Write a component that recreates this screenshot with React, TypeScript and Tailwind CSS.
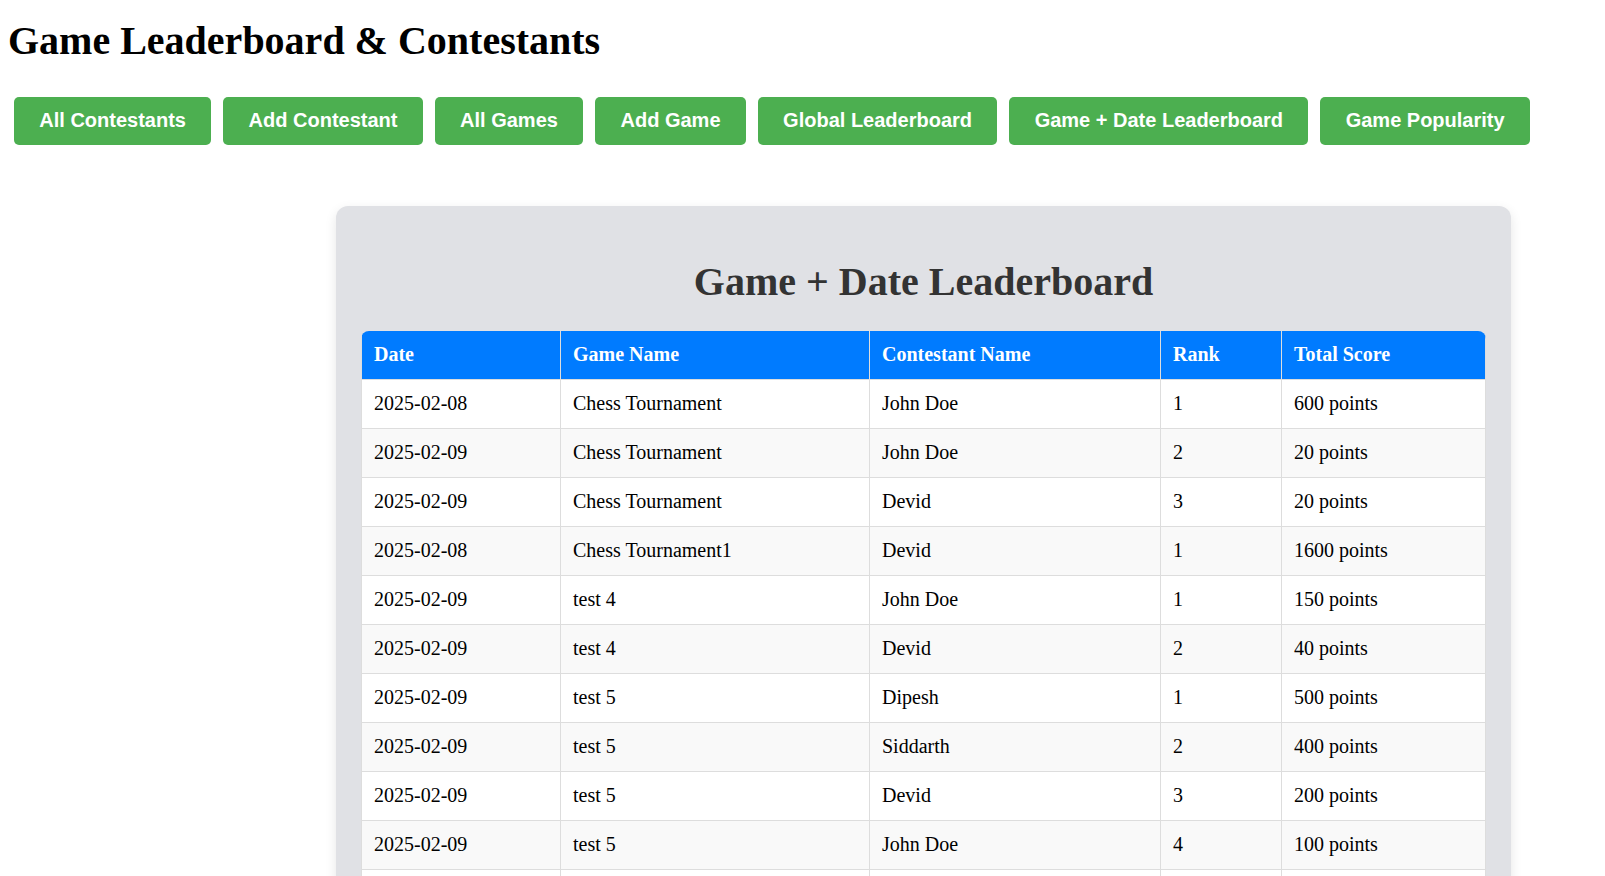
import React from 'react';

type Entry = {
  date: string;
  game: string;
  contestant: string;
  rank: number;
  score: number;
};

const navItems = [
  'All Contestants',
  'Add Contestant',
  'All Games',
  'Add Game',
  'Global Leaderboard',
  'Game + Date Leaderboard',
  'Game Popularity',
];

const entries: Entry[] = [
  { date: '2025-02-08', game: 'Chess Tournament', contestant: 'John Doe', rank: 1, score: 600 },
  { date: '2025-02-09', game: 'Chess Tournament', contestant: 'John Doe', rank: 2, score: 20 },
  { date: '2025-02-09', game: 'Chess Tournament', contestant: 'Devid', rank: 3, score: 20 },
  { date: '2025-02-08', game: 'Chess Tournament1', contestant: 'Devid', rank: 1, score: 1600 },
  { date: '2025-02-09', game: 'test 4', contestant: 'John Doe', rank: 1, score: 150 },
  { date: '2025-02-09', game: 'test 4', contestant: 'Devid', rank: 2, score: 40 },
  { date: '2025-02-09', game: 'test 5', contestant: 'Dipesh', rank: 1, score: 500 },
  { date: '2025-02-09', game: 'test 5', contestant: 'Siddarth', rank: 2, score: 400 },
  { date: '2025-02-09', game: 'test 5', contestant: 'Devid', rank: 3, score: 200 },
  { date: '2025-02-09', game: 'test 5', contestant: 'John Doe', rank: 4, score: 100 },
  { date: '2025-02-09', game: 'test 6', contestant: 'Dipesh', rank: 1, score: 80 },
];

const cell = 'border border-[#ddd] px-[12px] pt-[12px] pb-[13px] text-left leading-[23px]';

const App: React.FC = () => {
  return (
    <div className="min-h-screen bg-white px-[8px] pt-[18px] pb-[40px] font-['Liberation_Serif',serif] text-black">
      <h1 className="text-[40px] font-bold leading-[46px]">Game Leaderboard &amp; Contestants</h1>

      {/* Navigation */}
      <div className="mt-[33px] ml-[6px] flex gap-[12px]">
        {navItems.map((label) => (
          <button
            key={label}
            className="rounded-[5px] bg-[#4caf50] px-[25.3px] pt-[11px] pb-[13px] font-['Liberation_Sans',Arial,sans-serif] text-[20px] font-bold leading-[24px] text-white"
          >
            {label}
          </button>
        ))}
      </div>

      {/* Leaderboard card */}
      <div className="mt-[61px] ml-[328px] w-[1175px] rounded-[12px] bg-[#e0e1e5] px-[25px] pt-[25px] pb-[25px] shadow-[0_4px_12px_rgba(0,0,0,0.1)]">
        <h2 className="mt-[28px] mb-[26px] text-center text-[40px] font-bold leading-[46px] text-[#333]">
          Game + Date Leaderboard
        </h2>

        <div className="overflow-hidden rounded-[8px]">
          <table className="w-[1124px] table-fixed border-collapse text-[20px]">
            <thead>
              <tr className="bg-[#007bff] text-white">
                <th className={`${cell} w-[199px] border-t-0 font-bold`}>Date</th>
                <th className={`${cell} w-[309px] border-t-0 font-bold`}>Game Name</th>
                <th className={`${cell} w-[291px] border-t-0 font-bold`}>Contestant Name</th>
                <th className={`${cell} w-[121px] border-t-0 font-bold`}>Rank</th>
                <th className={`${cell} w-[204px] border-t-0 font-bold`}>Total Score</th>
              </tr>
            </thead>
            <tbody>
              {entries.map((e, i) => (
                <tr key={i} className={i % 2 === 1 ? 'bg-[#f9f9f9]' : 'bg-white'}>
                  <td className={cell}>{e.date}</td>
                  <td className={cell}>{e.game}</td>
                  <td className={cell}>{e.contestant}</td>
                  <td className={cell}>{e.rank}</td>
                  <td className={cell}>{e.score} points</td>
                </tr>
              ))}
            </tbody>
          </table>
        </div>
      </div>
    </div>
  );
};

export default App;
